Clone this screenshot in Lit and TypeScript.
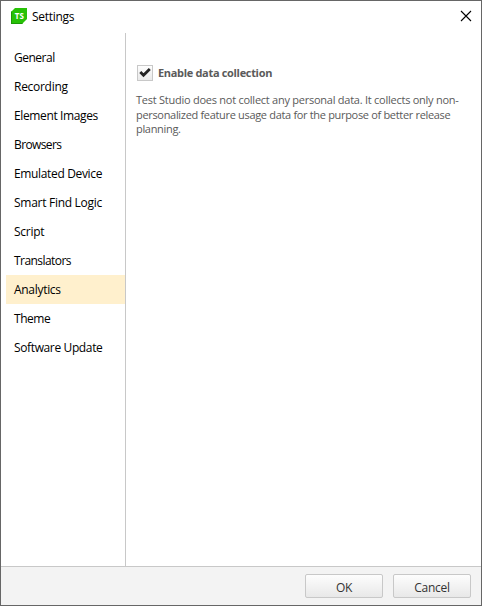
import { LitElement, html, css } from "lit";
import { customElement, state } from "lit/decorators.js";
import { classMap } from "lit/directives/class-map.js";
import { styleMap } from "lit/directives/style-map.js";

// Each page carries the tracking (px) that keeps its label compact.
const PAGES: { name: string; tracking: number }[] = [
  { name: "General", tracking: -0.5 },
  { name: "Recording", tracking: -0.28 },
  { name: "Element Images", tracking: -0.37 },
  { name: "Browsers", tracking: -0.62 },
  { name: "Emulated Device", tracking: -0.35 },
  { name: "Smart Find Logic", tracking: -0.28 },
  { name: "Script", tracking: -0.25 },
  { name: "Translators", tracking: -0.55 },
  { name: "Analytics", tracking: -0.3 },
  { name: "Theme", tracking: -0.45 },
  { name: "Software Update", tracking: -0.37 },
];

@customElement("app-root")
export class AppRoot extends LitElement {
  @state() private current = "Analytics";
  @state() private enabled = true;

  static styles = css`
    :host {
      display: block;
      font-family: "Open Sans", "Noto Sans", sans-serif;
      font-size: 12px;
      color: #000;
    }
    * { box-sizing: border-box; }
    .window {
      width: 482px;
      height: 606px;
      border: 1px solid #666;
      background: #fff;
      display: flex;
      flex-direction: column;
    }
    .titlebar {
      height: 32px;
      flex: none;
      display: flex;
      align-items: center;
      padding: 0 9px 0 10px;
    }
    .logo { width: 16px; height: 16px; margin-right: 5px; margin-top: -2px; }
    .title { flex: 1; letter-spacing: -0.3px; margin-top: -2px; }
    .close { width: 12px; height: 12px; margin-top: -2px; }
    .body { flex: 1; display: flex; min-height: 0; }
    .nav {
      width: 125px;
      border-right: 1px solid #c8c8c8;
      padding: 10px 0 0 5px;
    }
    .item {
      height: 29px;
      line-height: 29px;
      padding-left: 8px;
      white-space: nowrap;
    }
    .selected { background: #fff0cd; }
    .content { flex: 1; padding: 32px 0 0 10px; color: #5a5a5a; }
    .option { display: flex; align-items: center; height: 16px; padding-left: 1px; }
    .box {
      width: 16px;
      height: 16px;
      border: 1px solid #c8c8c8;
      background: linear-gradient(#fdfdfd, #e9e9e9);
      display: flex;
    }
    .option-label {
      margin: -2px 0 0 5px;
      font-size: 11px;
      font-weight: 700;
      letter-spacing: -0.32px;
      white-space: nowrap;
    }
    .note {
      margin-top: 12px;
      font-size: 11px;
      line-height: 14.5px;
      white-space: nowrap;
    }
    .l1 { letter-spacing: -0.25px; }
    .l2 { letter-spacing: -0.32px; }
    .footer {
      height: 39px;
      flex: none;
      border-top: 1px solid #c8c8c8;
      background: #f3f3f3;
      display: flex;
      justify-content: flex-end;
      gap: 10px;
      padding: 7px 10px 0 0;
    }
    .button {
      width: 78px;
      height: 24px;
      border: 1px solid #c8c8c8;
      border-radius: 2px;
      background: linear-gradient(#fdfdfd, #e8e8e8);
      color: #333;
      font: inherit;
      line-height: 22px;
      padding: 2px 0 0;
      text-align: center;
      letter-spacing: -0.25px;
    }
  `;

  render() {
    return html`
      <div class="window">
        <div class="titlebar">
          <svg class="logo" viewBox="0 0 16 16">
            <path d="M4 0H16V11L11 16H0V4Z" fill="#27c106" />
            <path d="M0 4L1 3V15H12L11 16H0Z" fill="#1a9905" />
            <text x="8.300" y="11" text-anchor="middle" font-size="8" font-weight="700" fill="#fff">TS</text>
          </svg>
          <div class="title">Settings</div>
          <svg class="close" viewBox="0 0 12 12">
            <path d="M1 1L11 11M11 1L1 11" stroke="#000" stroke-width="1.100" />
          </svg>
        </div>
        <div class="body">
          <div class="nav">
            ${PAGES.map(
              (p) => html`<div
                class=${classMap({ item: true, selected: p.name === this.current })}
                @click=${() => (this.current = p.name)}
              ><span style=${styleMap({ letterSpacing: `${p.tracking}px` })}>${p.name}</span></div>`
            )}
          </div>
          <div class="content">
            <div class="option" @click=${() => (this.enabled = !this.enabled)}>
              <div class="box">
                ${this.enabled
                  ? html`<svg width="14" height="14" viewBox="0 0 14 14">
                      <path d="M2.300 6L5.500 9.200L11.800 3" fill="none" stroke="#222" stroke-width="2.800" />
                    </svg>`
                  : ""}
              </div>
              <div class="option-label">Enable data collection</div>
            </div>
            <div class="note">
              <div class="l1">Test Studio does not collect any personal data. It collects only non-</div>
              <div class="l2">personalized feature usage data for the purpose of better release</div>
              <div class="l2">planning.</div>
            </div>
          </div>
        </div>
        <div class="footer">
          <button class="button">OK</button>
          <button class="button">Cancel</button>
        </div>
      </div>
    `;
  }
}
